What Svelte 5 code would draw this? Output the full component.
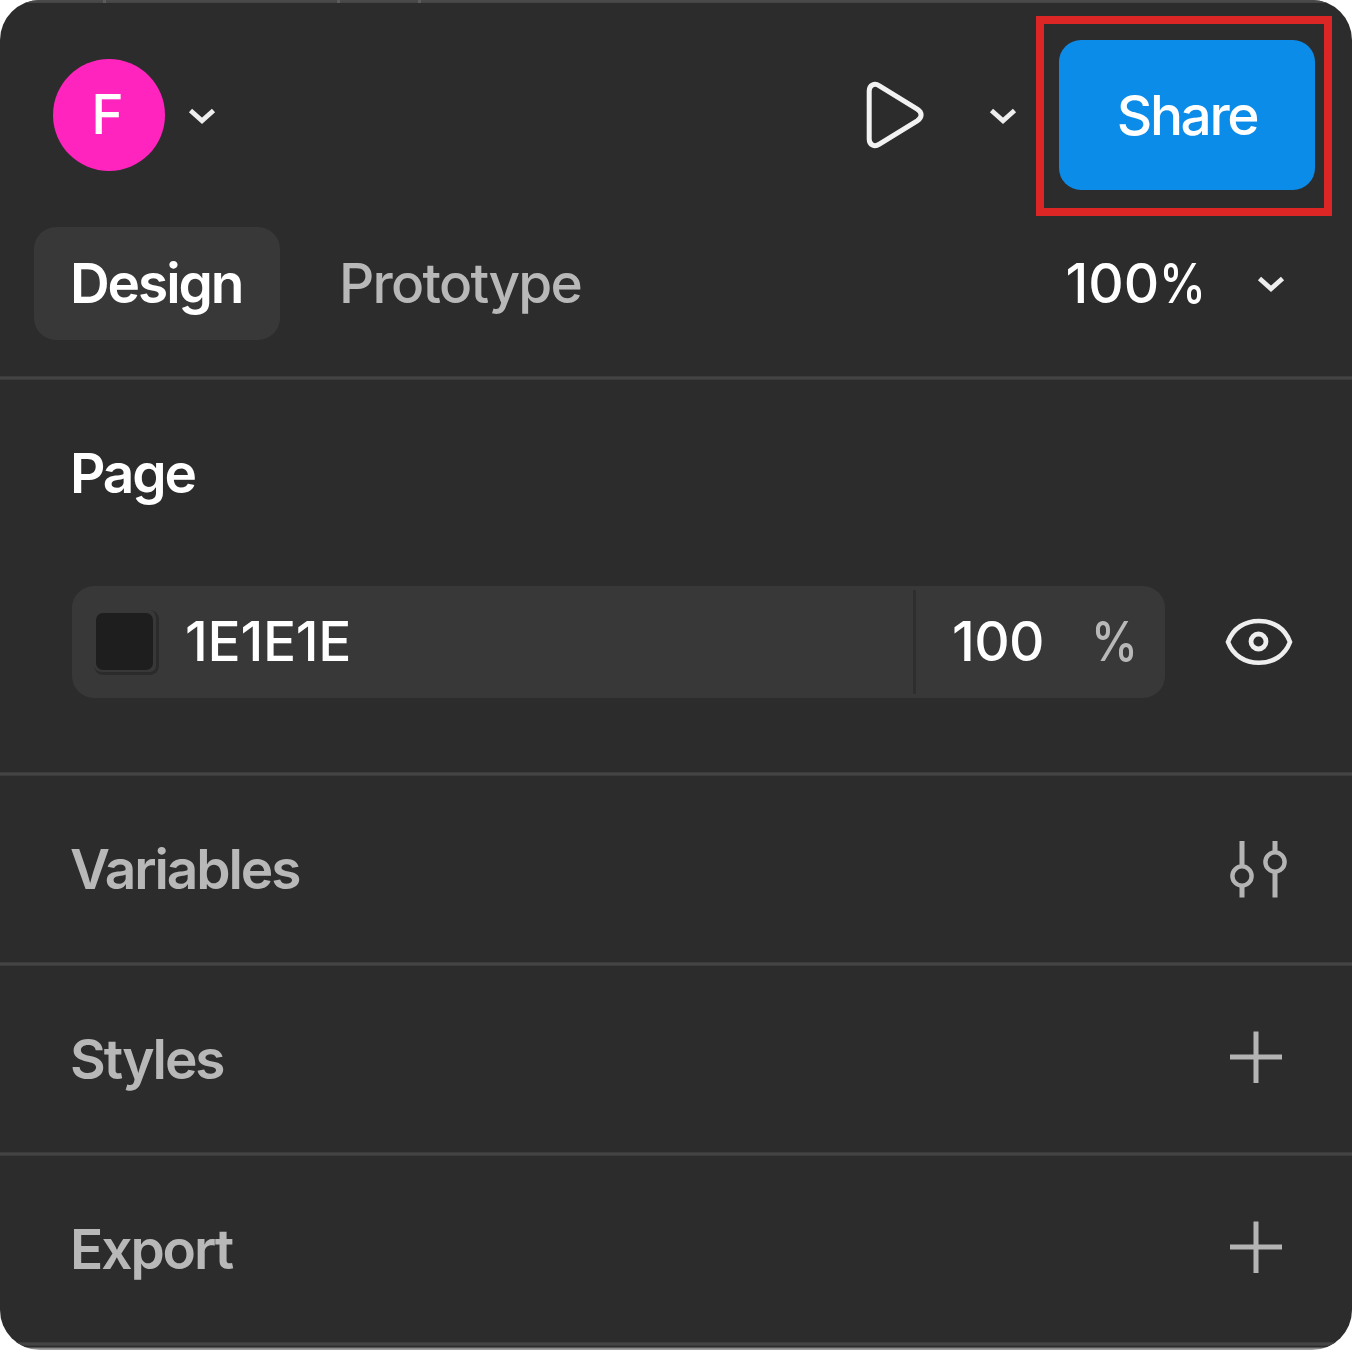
<script>
  const assets = [
    { name: 'Variables', icon: 'sliders' },
    { name: 'Styles', icon: 'plus' },
    { name: 'Export', icon: 'plus' }
  ];
</script>

{#snippet chevron()}
  <svg class="chevron" width="30" height="20" viewBox="0 0 30 20">
    <path d="M3.500 5.500 15 15.700 26.500 5.500" fill="none" stroke="#eee" stroke-width="4.800" />
  </svg>
{/snippet}

<main class="panel">
  <div class="edge"><i></i><i></i><i></i></div>
  <header class="toolbar">
    <button class="account">
      <span class="avatar">F</span>
      {@render chevron()}
    </button>
    <div class="actions">
      <svg class="play" width="64" height="74" viewBox="0 0 64 74">
        <path
          d="M5.200 13V61C5.200 67 10.400 69.400 15.400 66.200L53.200 42.800C58.400 39.400 58.400 34.600 53.200 31.200L15.400 7.800C10.400 4.600 5.200 7 5.200 13Z"
          fill="none" stroke="#f2f2f2" stroke-width="5" />
      </svg>
      {@render chevron()}
      <button class="share"><span class="t-share">Share</span></button>
    </div>
  </header>

  <nav class="tabs">
    <button class="tab active"><span class="t-design">Design</span></button>
    <button class="tab"><span class="t-prototype">Prototype</span></button>
    <button class="zoom">
      <span class="t-zoom">100<span class="percent">%</span></span>
      {@render chevron()}
    </button>
  </nav>
  <div class="rule"></div>

  <section class="page">
    <h2 class="t-page">Page</h2>
    <div class="fill">
      <div class="field">
        <div class="color">
          <span class="swatch"><span class="chip"></span></span>
          <span class="t-hex">1E1E1E</span>
        </div>
        <div class="opacity">
          <span class="t-opacity">100</span>
          <span class="unit"><span class="percent">%</span></span>
        </div>
      </div>
      <svg class="eye" width="70" height="56" viewBox="0 0 70 56" fill="none" stroke="#eee">
        <path d="M4 28C9 14 21 7 35 7S61 14 66 28C61 41.500 49 48.800 35 48.800S9 41.500 4 28Z" stroke-width="4.600" />
        <circle cx="34.500" cy="27.500" r="7.500" stroke-width="4.800" />
      </svg>
    </div>
  </section>
  <div class="rule"></div>

  {#each assets as asset}
    <section class="row">
      <h2>{asset.name}</h2>
      {#if asset.icon === 'sliders'}
        <svg width="60" height="60" viewBox="0 0 60 60" fill="none" stroke="#b4b4b4" stroke-width="4.400">
          <path d="M16 2V27.500M16 47V58.500M49 2V13M49 33V58.500" stroke-width="5" />
          <circle cx="16" cy="37" r="9.600" />
          <circle cx="49" cy="23" r="9.600" />
        </svg>
      {:else}
        <svg width="60" height="60" viewBox="0 0 60 60" fill="none" stroke="#b4b4b4" stroke-width="5">
          <path d="M4 28H56M30 2.500V54" />
        </svg>
      {/if}
    </section>
    <div class="rule"></div>
  {/each}
</main>

<style>
  :global(body) {
    margin: 0;
    background: #fff;
  }
  .panel {
    box-sizing: border-box;
    width: 1352px;
    height: 1350px;
    display: flex;
    flex-direction: column;
    overflow: hidden;
    border-radius: 40px;
    background: linear-gradient(#2c2c2c 1347px, #808080 1348px, #a8a8a8 1350px);
    color: #fff;
    font: 500 55px/66px Inter, sans-serif;
  }
  button {
    border: 0;
    padding: 0;
    background: none;
    color: inherit;
    font: inherit;
    letter-spacing: inherit;
    display: flex;
    align-items: center;
  }
  h2 {
    margin: 0;
    font: inherit;
  }
  svg {
    display: block;
    flex: none;
    overflow: visible;
  }
  span {
    white-space: nowrap;
  }
  .edge {
    flex: none;
    height: 3px;
    padding-left: 103px;
    display: flex;
    background: linear-gradient(#4c4c4c, #444);
  }
  .edge i {
    width: 3px;
    background: #5c5c5c;
  }
  .edge i:nth-child(2) {
    margin-left: 231px;
  }
  .edge i:nth-child(3) {
    margin-left: 78px;
  }
  .toolbar {
    height: 224px;
    box-sizing: border-box;
    padding: 0 37px 0 53px;
    display: flex;
    justify-content: space-between;
    align-items: center;
  }
  .account {
    gap: 22px;
  }
  .avatar {
    width: 112px;
    height: 112px;
    line-height: 111px;
    border-radius: 50%;
    background: #ff24bd;
    text-align: center;
    text-indent: -3px;
  }
  .actions {
    display: flex;
    align-items: center;
  }
  .play {
    margin-right: 60px;
  }
  .share {
    position: relative;
    width: 256px;
    height: 150px;
    margin-left: 41px;
    border-radius: 22px;
    background: #0c8ce9;
    justify-content: center;
    letter-spacing: -2.4px;
  }
  .t-share {
    padding-bottom: 1px;
  }
  .share::after {
    content: '';
    position: absolute;
    inset: -24px -17px -26px -23px;
    border: 8px solid #dc2626;
  }
  .tabs {
    display: flex;
    height: 113px;
    margin-bottom: 36px;
    padding: 0 66px 0 34px;
  }
  .tab {
    width: 246px;
    box-sizing: border-box;
    padding-left: 36px;
    border-radius: 22px;
    color: #b8b8b8;
    letter-spacing: -1.75px;
  }
  .tab + .tab {
    margin-left: 23px;
  }
  .tab span,
  .t-zoom {
    padding-bottom: 2px;
  }
  .active {
    background: #383838;
    color: #fff;
    font-weight: 600;
    letter-spacing: -2.1px;
  }
  .zoom {
    margin-left: auto;
    gap: 42px;
  }
  .zoom .chevron {
    margin-bottom: 1px;
  }
  .percent {
    display: inline-block;
    transform: scaleX(0.86);
    transform-origin: left;
  }
  .rule {
    flex: none;
    height: 4px;
    background: linear-gradient(#353535, #444 30%, #444 70%, #353535);
  }
  .page {
    height: 392px;
    box-sizing: border-box;
    padding: 60px 58px 0 70px;
    font-weight: 600;
  }
  .t-page {
    letter-spacing: -2.2px;
  }
  .fill {
    margin-top: 80px;
    display: flex;
    justify-content: space-between;
    align-items: center;
    font-weight: 500;
  }
  .field {
    width: 1093px;
    height: 112px;
    margin-left: 2px;
    display: flex;
    align-items: center;
    border-radius: 22px;
    background: #383838;
  }
  .color {
    width: 844px;
    height: 104px;
    box-sizing: border-box;
    padding-left: 22px;
    display: flex;
    align-items: center;
    gap: 26px;
    border-right: 3px solid #2e2e2e;
  }
  .t-hex,
  .opacity {
    padding-bottom: 2px;
  }
  .t-hex {
    letter-spacing: -0.3px;
  }
  .swatch {
    width: 65px;
    height: 65px;
    box-sizing: border-box;
    padding: 3px 0 0 2px;
    border: 0 solid #2b2b2b;
    border-width: 0 3px 3px 0;
    border-radius: 9px;
  }
  .chip {
    display: block;
    width: 57px;
    height: 57px;
    border-radius: 7px;
    background: #1e1e1e;
  }
  .opacity {
    flex: 1;
    padding-left: 36px;
    padding-right: 20px;
    display: flex;
    justify-content: space-between;
    letter-spacing: -0.7px;
  }
  .unit {
    color: #b8b8b8;
  }
  .row {
    height: 186px;
    box-sizing: border-box;
    padding: 0 66px 0 70px;
    display: flex;
    align-items: center;
    justify-content: space-between;
    color: #b8b8b8;
    font-weight: 600;
    letter-spacing: -2.1px;
  }
  .row h2 {
    padding-bottom: 1px;
  }
</style>
